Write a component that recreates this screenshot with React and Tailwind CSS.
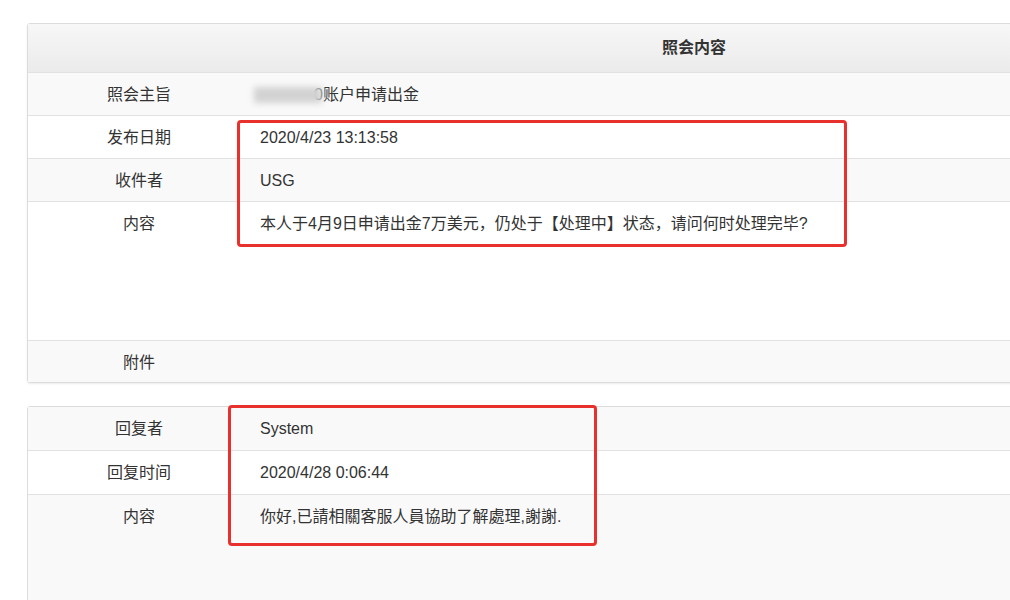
const font = {
  fontFamily: '"Liberation Sans", Arial, "Noto Sans CJK SC", sans-serif',
};

const Row = ({ label, children, h = "h-[43px]", shade, first }) => (
  <div
    className={`flex ${h} ${first ? "" : "border-t border-[#e2e2e2]"} ${
      shade ? "bg-[#f9f9f9]" : "bg-white"
    }`}
  >
    <div className="w-[222px] shrink-0 pt-[12px] text-center leading-[20px]">
      {label}
    </div>
    <div className="flex-1 pl-[10px] pt-[12px] leading-[20px]">{children}</div>
  </div>
);

export default function App() {
  return (
    <div
      className="w-screen h-screen overflow-hidden bg-white text-[16px] text-[#333]"
      style={font}
    >
      <div className="pl-[27px] pt-[23px] w-[1400px]">
        {/* 照会 */}
        <div className="relative w-[1334px] border border-[#dcdcdc] rounded-[3px] shadow-[0_1px_2px_rgba(0,0,0,0.08)]">
          <div className="h-[48px] flex items-center justify-center bg-gradient-to-b from-[#f7f7f7] to-[#ebebeb] font-bold text-[16px] text-[#333]">
            照会内容
          </div>
          <Row label="照会主旨" shade>
            <span className="relative inline-flex items-center">
              <span className="inline-block w-[60px] h-[16px] ml-[-4px] mr-[-2px]" />
              <span className="text-[#555]">0</span>账户申请出金
              <span className="absolute left-[-6px] top-[2px] w-[68px] h-[16px] bg-[#d2d2d2] blur-[3px]" />
            </span>
          </Row>
          <Row label="发布日期">2020/4/23 13:13:58</Row>
          <Row label="收件者" shade>
            USG
          </Row>
          <Row label="内容" h="h-[139px]">
            本人于4月9日申请出金7万美元，仍处于【处理中】状态，请问何时处理完毕?
          </Row>
          <Row label="附件" h="h-[42px]" shade />

          <div className="absolute left-[209px] top-[96px] w-[610px] h-[127px] border-[3px] border-[#e8302c] rounded-[4px]" />
        </div>

        {/* 回复 */}
        <div className="relative mt-[23px] w-[1334px] border border-[#dcdcdc] rounded-[3px]">
          <Row label="回复者" h="h-[43px]" shade first>
            System
          </Row>
          <Row label="回复时间" h="h-[44px]">
            2020/4/28 0:06:44
          </Row>
          <Row label="内容" h="h-[140px]" shade>
            你好,已請相關客服人員協助了解處理,謝謝.
          </Row>

          <div className="absolute left-[200px] top-[-2px] w-[369px] h-[141px] border-[3px] border-[#e8302c] rounded-[4px]" />
        </div>
      </div>
    </div>
  );
}
